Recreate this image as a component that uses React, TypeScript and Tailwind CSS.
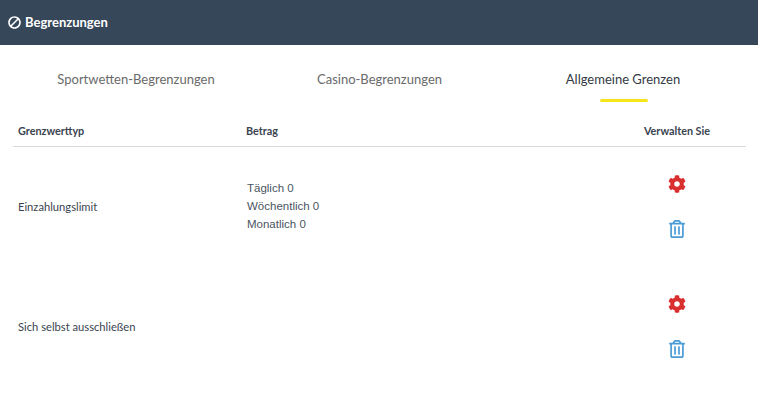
import { FaBan, FaCog, FaRegTrashAlt } from 'react-icons/fa';

const tabs = [
  { label: 'Sportwetten-Begrenzungen', active: false },
  { label: 'Casino-Begrenzungen', active: false },
  { label: 'Allgemeine Grenzen', active: true },
];

function Actions() {
  return (
    <div className="flex flex-col items-center gap-[27px]">
      <FaCog className="text-[18px] text-[#d9302f]" />
      <FaRegTrashAlt className="text-[18px] text-[#4a9bd6]" />
    </div>
  );
}

export default function App() {
  return (
    <div className="w-[758px] h-[415px] overflow-hidden bg-white font-['Lato','Open_Sans',sans-serif]">
      {/* Header */}
      <div className="h-[45px] bg-[#36475a] flex items-center gap-[4px] pl-[8px] text-white">
        <FaBan className="text-[13px] -scale-x-100" />
        <span className="text-[13px] font-bold">Begrenzungen</span>
      </div>

      {/* Tabs */}
      <div className="grid grid-cols-[270px_217px_1fr] h-[58px] pl-[1px]">
        {tabs.map((tab) => (
          <div key={tab.label} className="relative pt-[25px] text-center">
            <span className={`text-[13px] leading-[18px] block ${tab.active ? 'text-[#333a44]' : 'text-[#6a6a6a]'}`}>
              {tab.label}
            </span>
            {tab.active && (
              <div className="absolute left-[112px] top-[54px] w-[48px] h-[3px] rounded-sm bg-[#f5e51b]" />
            )}
          </div>
        ))}
      </div>

      {/* Table */}
      <div className="ml-[13px] mr-[12px] text-[#3a4450]">
        <div className="grid grid-cols-[233px_1fr_120px] items-end h-[44px] pb-[7px] border-b border-[#d5d8dc] text-[10.8px] font-bold">
          <div className="pl-[5px]">Grenzwerttyp</div>
          <div>Betrag</div>
          <div className="text-center pr-[18px]">Verwalten Sie</div>
        </div>

        <div className="-mt-px grid grid-cols-[233px_1fr_120px] items-center h-[120px] text-[11.2px]">
          <div className="pl-[5px] pt-[3px]">Einzahlungslimit</div>
          <div className="pl-[1px] font-['Liberation_Sans',sans-serif] text-[11.5px] leading-[18px] text-[#4a5562]">
            <div>Täglich 0</div>
            <div>Wöchentlich 0</div>
            <div>Monatlich 0</div>
          </div>
          <div className="flex justify-center pr-[18px]">
            <Actions />
          </div>
        </div>

        <div className="grid grid-cols-[233px_1fr_120px] items-center h-[120px] text-[11.2px]">
          <div className="pl-[5px] pt-[3px]">Sich selbst ausschließen</div>
          <div />
          <div className="flex justify-center pr-[18px]">
            <Actions />
          </div>
        </div>
      </div>
    </div>
  );
}
